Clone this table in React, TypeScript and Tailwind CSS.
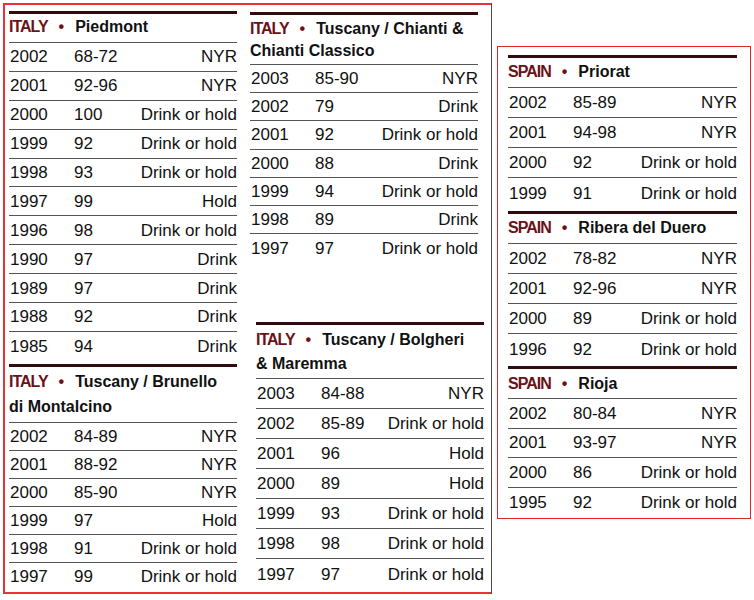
import React from 'react';

type Row = [string, string, string];

const piedmont: Row[] = [
  ['2002', '68-72', 'NYR'],
  ['2001', '92-96', 'NYR'],
  ['2000', '100', 'Drink or hold'],
  ['1999', '92', 'Drink or hold'],
  ['1998', '93', 'Drink or hold'],
  ['1997', '99', 'Hold'],
  ['1996', '98', 'Drink or hold'],
  ['1990', '97', 'Drink'],
  ['1989', '97', 'Drink'],
  ['1988', '92', 'Drink'],
  ['1985', '94', 'Drink'],
];

const brunello: Row[] = [
  ['2002', '84-89', 'NYR'],
  ['2001', '88-92', 'NYR'],
  ['2000', '85-90', 'NYR'],
  ['1999', '97', 'Hold'],
  ['1998', '91', 'Drink or hold'],
  ['1997', '99', 'Drink or hold'],
];

const chianti: Row[] = [
  ['2003', '85-90', 'NYR'],
  ['2002', '79', 'Drink'],
  ['2001', '92', 'Drink or hold'],
  ['2000', '88', 'Drink'],
  ['1999', '94', 'Drink or hold'],
  ['1998', '89', 'Drink'],
  ['1997', '97', 'Drink or hold'],
];

const bolgheri: Row[] = [
  ['2003', '84-88', 'NYR'],
  ['2002', '85-89', 'Drink or hold'],
  ['2001', '96', 'Hold'],
  ['2000', '89', 'Hold'],
  ['1999', '93', 'Drink or hold'],
  ['1998', '98', 'Drink or hold'],
  ['1997', '97', 'Drink or hold'],
];

const priorat: Row[] = [
  ['2002', '85-89', 'NYR'],
  ['2001', '94-98', 'NYR'],
  ['2000', '92', 'Drink or hold'],
  ['1999', '91', 'Drink or hold'],
];

const ribera: Row[] = [
  ['2002', '78-82', 'NYR'],
  ['2001', '92-96', 'NYR'],
  ['2000', '89', 'Drink or hold'],
  ['1996', '92', 'Drink or hold'],
];

const rioja: Row[] = [
  ['2002', '80-84', 'NYR'],
  ['2001', '93-97', 'NYR'],
  ['2000', '86', 'Drink or hold'],
  ['1995', '92', 'Drink or hold'],
];

type SectionProps = {
  country: string;
  lines: string[];
  rows: Row[];
  head: string;
  row: string;
  className?: string;
};

const Section = ({ country, lines, rows, head, row, className = '' }: SectionProps) => (
  <div className={className}>
    <div className="h-[3px] bg-[#300c0f]" />
    <div className={`border-b border-[#555] font-bold text-[16px] text-[#111] ${head}`}>
      <div>
        {lines.map((l, i) => (
          <div key={i} className="whitespace-nowrap">
            {i === 0 && (
              <>
                <span className="text-[#6b1218] tracking-[-1px]">{country}</span>
                <span className="text-[#6b1218] mx-[11px]">•</span>
              </>
            )}
            {l}
          </div>
        ))}
      </div>
    </div>
    {rows.map((r, i) => (
      <div
        key={r[0] + i}
        className={`flex items-center text-[17px] leading-none ${row} ${
          i < rows.length - 1 ? 'border-b border-[#555]' : ''
        }`}
      >
        <span className="w-[65px] pl-px">{r[0]}</span>
        <span className="flex-1">{r[1]}</span>
        <span>{r[2]}</span>
      </div>
    ))}
  </div>
);

export default function App() {
  return (
    <div className="flex items-start bg-white w-[754px] h-[600px] pt-[3px] pl-[3px] font-['Liberation_Sans',Arial,sans-serif] text-[#111]">
      {/* Italy frame: red top/left/bottom, dark right edge */}
      <div className="w-[489px] h-[591px] bg-[#4a4a4a] pr-px">
        <div className="w-[488px] h-[591px] bg-[#e8323a] pt-[2px] pl-[2px] pb-[2px]">
          <div className="flex w-[486px] h-[587px] bg-white pl-[4px] pt-[6px]">
            <div className="w-[228px]">
              <Section
                country="ITALY"
                lines={['Piedmont']}
                rows={piedmont}
                head="h-[29px] flex items-center pb-[2px] leading-[22px]"
                row="h-[28.9px]"
              />
              <Section
                className="mt-[3px]"
                country="ITALY"
                lines={['Tuscany / Brunello', 'di Montalcino']}
                rows={brunello}
                head="h-[56px] pt-[2px] leading-[25px]"
                row="h-[28px]"
              />
            </div>
            <div className="w-[234px] ml-[13px] mt-[1px]">
              <Section
                className="w-[228px]"
                country="ITALY"
                lines={['Tuscany / Chianti &', 'Chianti Classico']}
                rows={chianti}
                head="h-[50px] pt-[3px] leading-[22px]"
                row="h-[28.2px]"
              />
              <Section
                className="w-[228px] ml-[6px] mt-[60px]"
                country="ITALY"
                lines={['Tuscany / Bolgheri', '& Maremma']}
                rows={bolgheri}
                head="h-[54px] pt-[3px] leading-[24px]"
                row="h-[30px]"
              />
            </div>
          </div>
        </div>
      </div>

      {/* Spain box */}
      <div className="ml-[5px] mt-[43px] w-[254px] h-[473px] border border-[#e2262c] pl-[10px] pt-[8px]">
        <div className="w-[229px]">
          <Section
            country="SPAIN"
            lines={['Priorat']}
            rows={priorat}
            head="h-[30px] flex items-center pb-[1px] leading-[22px]"
            row="h-[30px]"
          />
          <Section
            className="mt-[3px]"
            country="SPAIN"
            lines={['Ribera del Duero']}
            rows={ribera}
            head="h-[30px] flex items-center pb-[1px] leading-[22px]"
            row="h-[30px]"
          />
          <Section
            className="mt-[2px]"
            country="SPAIN"
            lines={['Rioja']}
            rows={rioja}
            head="h-[30px] flex items-center leading-[22px]"
            row="h-[29.5px]"
          />
        </div>
      </div>
    </div>
  );
}
